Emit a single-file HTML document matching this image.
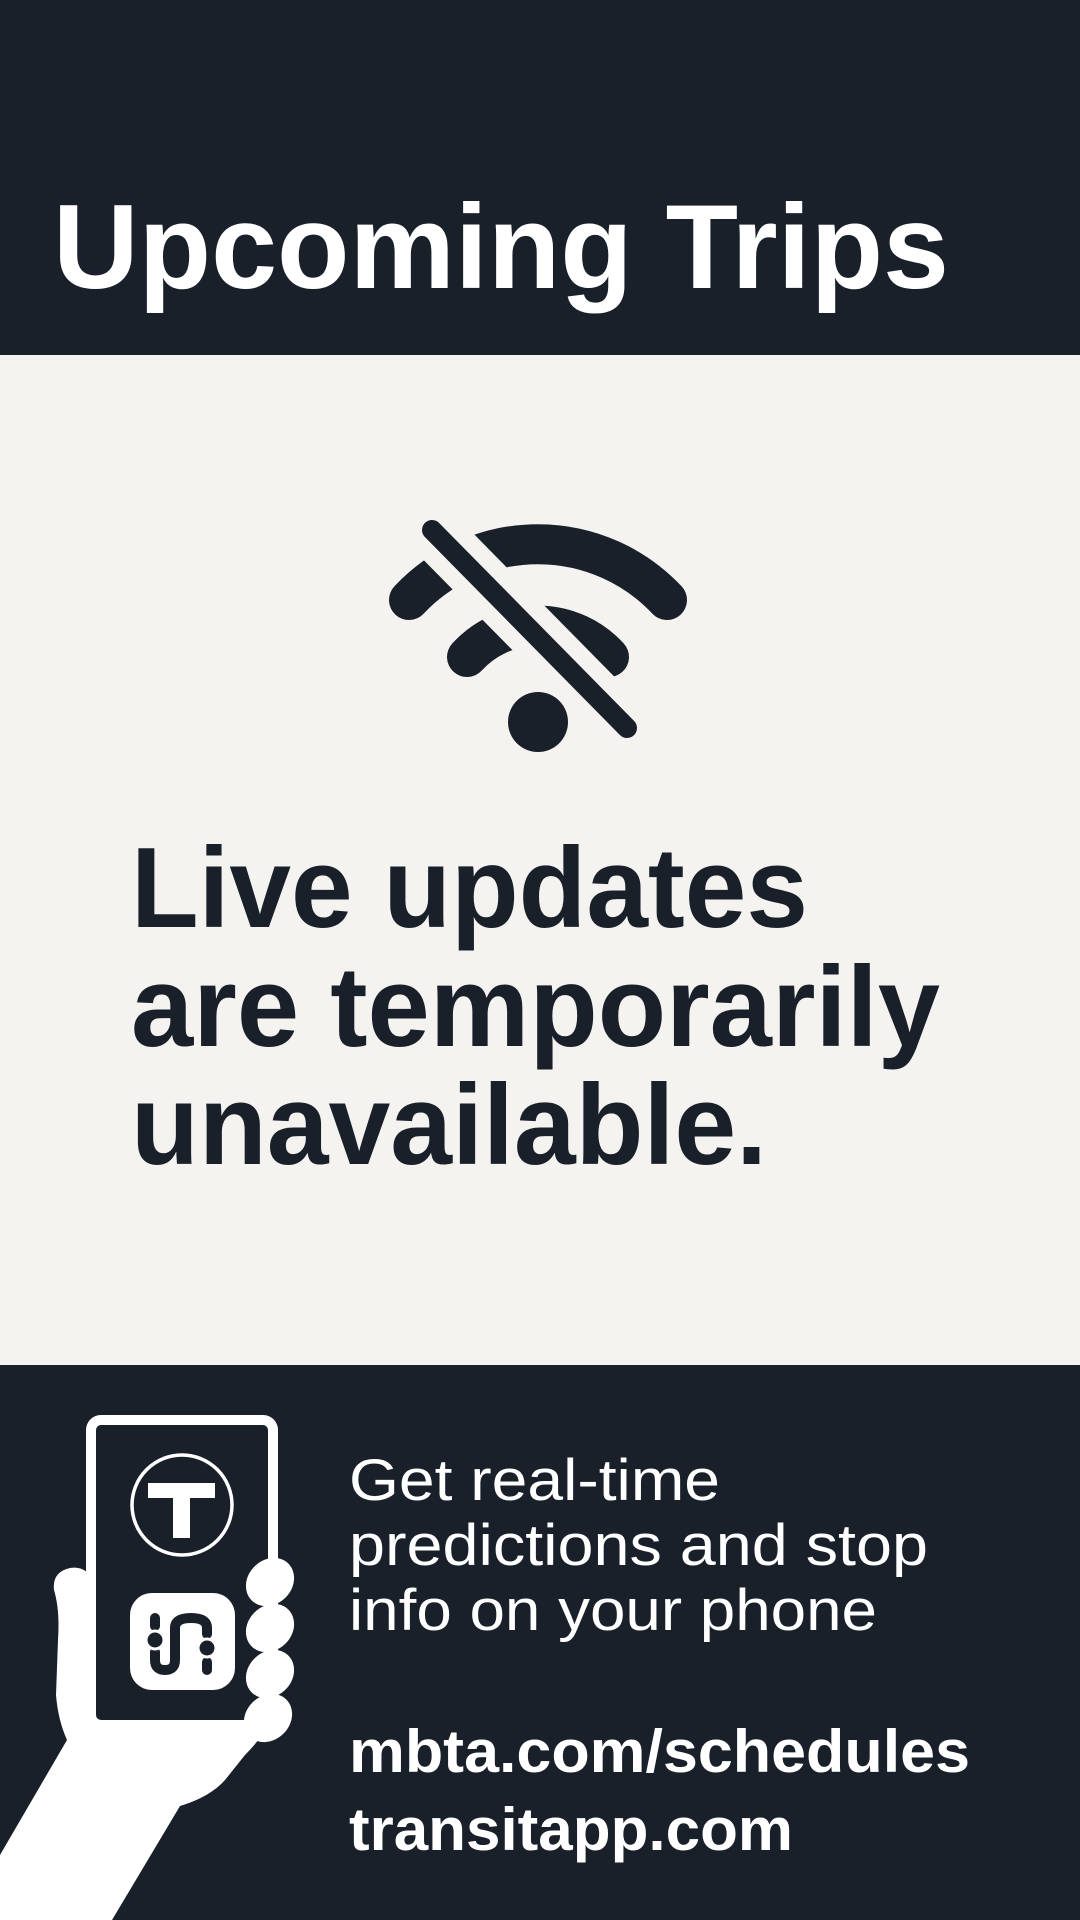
<!DOCTYPE html>
<html><head><meta charset="utf-8"><style>
html,body{margin:0;padding:0;background:#f4f3f0;}
svg{display:block;}
text{font-family:"Liberation Sans",sans-serif;}
</style></head><body>
<svg width="1080" height="1920" viewBox="0 0 1080 1920" xmlns="http://www.w3.org/2000/svg">
<rect x="0" y="0" width="1080" height="355" fill="#19202a"/>
<rect x="0" y="355" width="1080" height="1010" fill="#f4f3f0"/>
<rect x="0" y="1365" width="1080" height="555" fill="#19202a"/>

<text x="53" y="288" font-size="120" font-weight="bold" fill="#fff" textLength="896" lengthAdjust="spacingAndGlyphs">Upcoming Trips</text>

<g fill="none" stroke-linecap="round">
  <path d="M409 600 A177 177 0 0 1 667 600" stroke="#19202a" stroke-width="40"/>
  <path d="M467 657 A96 96 0 0 1 609 657" stroke="#19202a" stroke-width="40"/>
  <line x1="432" y1="530" x2="627" y2="728" stroke="#f4f3f0" stroke-width="54"/>
  <line x1="432" y1="530" x2="627" y2="728" stroke="#19202a" stroke-width="20"/>
</g>
<circle cx="538" cy="722" r="30" fill="#19202a"/>

<text font-size="114" font-weight="bold" fill="#19202a">
  <tspan x="131" y="927" textLength="677" lengthAdjust="spacingAndGlyphs">Live updates</tspan>
  <tspan x="131" y="1046" textLength="809" lengthAdjust="spacingAndGlyphs">are temporarily</tspan>
  <tspan x="131" y="1164" textLength="636" lengthAdjust="spacingAndGlyphs">unavailable.</tspan>
</text>

<!-- hand -->
<path d="M0 1855 L67 1740 Q58 1720 56 1695 L58 1640 Q60 1610 54 1590 Q52 1572 70 1568 Q82 1566 90 1575 L260 1575 L262 1735 Q255 1745 245 1755 L225 1780 Q210 1797 180 1806 L112 1920 L0 1920 Z" fill="#fff"/>
<rect x="91" y="1420" width="182" height="305" rx="10" fill="#19202a" stroke="#fff" stroke-width="10"/>
<g fill="#fff">
  <ellipse cx="270" cy="1582" rx="26" ry="22" transform="rotate(-45 270 1582)"/>
  <ellipse cx="270" cy="1628" rx="26" ry="22" transform="rotate(-45 270 1628)"/>
  <ellipse cx="270" cy="1674" rx="26" ry="22" transform="rotate(-45 270 1674)"/>
  <ellipse cx="268" cy="1718" rx="26" ry="22" transform="rotate(-45 268 1718)"/>
</g>

<circle cx="182" cy="1505" r="50" fill="none" stroke="#fff" stroke-width="3.5"/>
<path d="M148 1483 H215 V1498 H190 V1538 H173 V1498 H148 Z" fill="#fff"/>

<rect x="130" y="1593" width="105" height="97" rx="22" fill="#fff"/>
<g fill="none" stroke="#19202a" stroke-width="10" stroke-linecap="round">
  <path d="M155 1618 V1626"/>
  <path d="M155 1652 V1660 Q155 1670 165 1670 Q175 1670 175 1660 V1628 Q175 1618 191 1618 Q207 1618 207 1628 V1634"/>
  <path d="M207 1662 V1670"/>
</g>
<circle cx="155" cy="1640" r="9" fill="#19202a" stroke="#fff" stroke-width="3"/>
<circle cx="207" cy="1648" r="9" fill="#19202a" stroke="#fff" stroke-width="3"/>

<text font-size="58" fill="#fff">
  <tspan x="349" y="1500" textLength="371" lengthAdjust="spacingAndGlyphs">Get real-time</tspan>
  <tspan x="349" y="1565" textLength="579" lengthAdjust="spacingAndGlyphs">predictions and stop</tspan>
  <tspan x="349" y="1630" textLength="528" lengthAdjust="spacingAndGlyphs">info on your phone</tspan>
</text>
<text font-size="60" font-weight="bold" fill="#fff">
  <tspan x="349" y="1772" textLength="621" lengthAdjust="spacingAndGlyphs">mbta.com/schedules</tspan>
  <tspan x="349" y="1850" textLength="444" lengthAdjust="spacingAndGlyphs">transitapp.com</tspan>
</text>
</svg>
</body></html>
